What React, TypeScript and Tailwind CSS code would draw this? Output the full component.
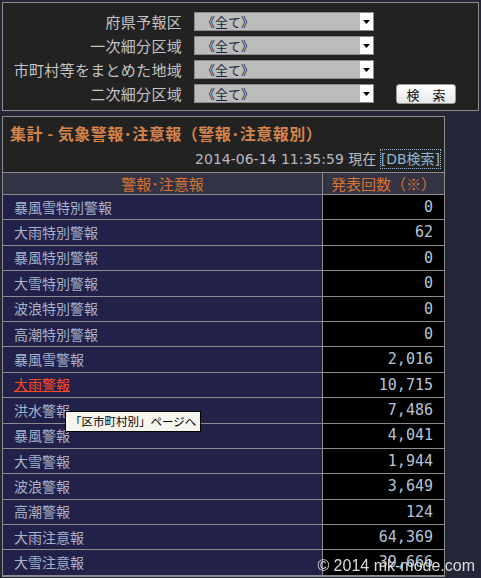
const jp = { fontFamily: '"Noto Sans CJK JP", "Noto Sans", sans-serif' };

const areas = ["府県予報区", "一次細分区域", "市町村等をまとめた地域", "二次細分区域"];

const rows: [string, string][] = [
  ["暴風雪特別警報", "0"],
  ["大雨特別警報", "62"],
  ["暴風特別警報", "0"],
  ["大雪特別警報", "0"],
  ["波浪特別警報", "0"],
  ["高潮特別警報", "0"],
  ["暴風雪警報", "2,016"],
  ["大雨警報", "10,715"],
  ["洪水警報", "7,486"],
  ["暴風警報", "4,041"],
  ["大雪警報", "1,944"],
  ["波浪警報", "3,649"],
  ["高潮警報", "124"],
  ["大雨注意報", "64,369"],
  ["大雪注意報", "39,666"],
];

function Select() {
  return (
    <div className="flex h-[19px] w-[180px] items-center border border-[#8a8a8a] bg-[#bcbcbc]">
      <span className="flex-1 pl-[7px] text-[13px] leading-none text-[#1c2440]">《全て》</span>
      <span className="flex h-full w-[13px] items-center justify-center bg-white">
        <svg width="7" height="4" viewBox="0 0 7 4">
          <path d="M0 0h7L3.5 4z" fill="#000" />
        </svg>
      </span>
    </div>
  );
}

export default function App() {
  return (
    <div className="relative min-h-[578px] bg-[#262639] pt-[2px] pb-6" style={jp}>
      {/* Search form */}
      <div className="mx-[2px] border border-[#8c8c8c] bg-[#222222] pt-[9px] pb-[2px]">
        {areas.map((a, i) => (
          <div key={a} className="flex h-[24px] items-start">
            <div className="w-[179px] text-right text-[15px] leading-[19px] tracking-[0.3px] text-[#c4c4c4]">{a}</div>
            <div className="ml-[12px]">
              <Select />
            </div>
            {i === 3 && (
              <button className="ml-[22px] h-[20px] w-[60px] rounded-[3px] border border-[#9a9a9a] bg-gradient-to-b from-white to-[#e8e8e8] text-[13px] leading-none text-[#111]">
                検　索
              </button>
            )}
          </div>
        ))}
      </div>

      {/* Result panel */}
      <div className="mt-[5px] ml-[2px] w-[443px] border border-[#8c8c8c] bg-[#222222]">
        <div className="pl-[7px] pt-[6px] text-[16px] font-bold leading-[20px] tracking-[0.5px] text-[#d4844a]">
          集計 - 気象警報･注意報（警報･注意報別）
        </div>
        <div
          className="flex justify-end pr-[4px] pt-[7px] pb-[4px] text-[14px] leading-[18px] text-[#b8b8c0]"
          style={{ fontFamily: '"DejaVu Sans", "Noto Sans CJK JP", sans-serif' }}
        >
          <span>2014-06-14 11:35:59 現在&nbsp;</span>
          <span className="outline outline-1 outline-dotted outline-[#9ab8d8] text-[#8fb4d8]">[DB検索]</span>
        </div>
        <div className="border-t border-[#8c8c8c]">
          <div className="flex h-[22px] border-b border-[#8c8c8c] bg-[#333346] text-[15px] leading-[21px] text-[#d8722e]">
            <div className="w-[320px] border-r border-[#8c8c8c] text-center">警報･注意報</div>
            <div className="flex-1 text-center">発表回数（※）</div>
          </div>
          {rows.map(([name, n]) => (
            <div key={name} className="flex h-[25.4px] border-b border-[#8c8c8c]">
              <div className="flex w-[320px] items-center border-r border-[#8c8c8c] bg-[#21214a] pl-[11px] text-[14px]">
                {name === "大雨警報" ? (
                  <span className="text-[#ff4a1e] underline">{name}</span>
                ) : (
                  <span className="text-[#a9b2c9]">{name}</span>
                )}
              </div>
              <div
                className="flex flex-1 items-center justify-end bg-black pr-[11px] text-[15px] text-[#b6c4d6]"
                style={{ fontFamily: '"DejaVu Sans Mono", monospace' }}
              >
                {n}
              </div>
            </div>
          ))}
        </div>
      </div>

      {/* Tooltip */}
      <div className="absolute left-[65px] top-[411px] border border-black bg-[#f6f6ef] px-[4px] text-[11.5px] leading-[19px] text-black">
        「区市町村別」ページへ
      </div>

      {/* Copyright overlay */}
      <div
        className="fixed bottom-[4px] right-[6px] text-[16px] leading-none text-[#dcdce0]"
        style={{ fontFamily: '"Liberation Sans", sans-serif' }}
      >
        © 2014 mk-mode.com
      </div>
    </div>
  );
}
